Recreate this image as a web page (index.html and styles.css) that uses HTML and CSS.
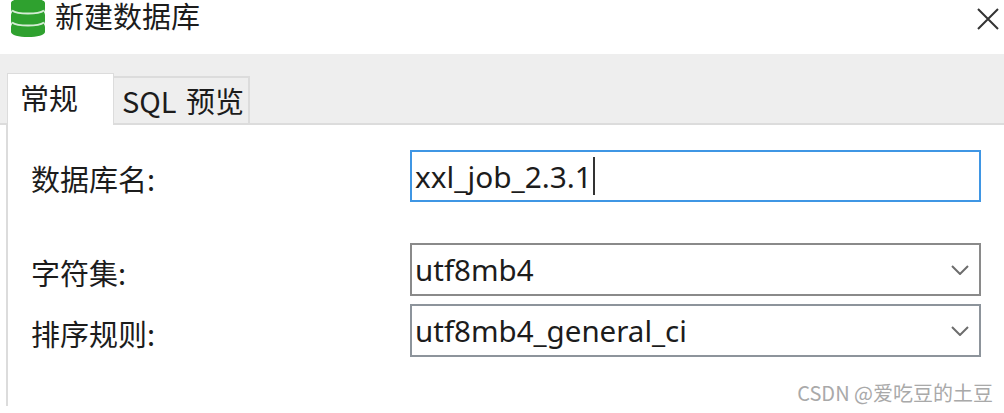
FILE: index.html
```html
<!DOCTYPE html>
<html lang="zh">
<head>
<meta charset="utf-8">
<title>新建数据库</title>
<link rel="stylesheet" href="styles.css">
</head>
<body>
<div class="dialog">
  <header class="titlebar">
    <svg class="db-icon" width="36" height="38" viewBox="0 0 36 38">
      <path class="db-body" d="M1 3C1 0 9-2 18-2S35 0 35 3V9C35 10 34.500 11 34 12C34.500 13 35 14 35 15V21C35 22 34.500 23 34 24C34.500 25 35 26 35 27V32C35 35 27 37 18 37S1 35 1 32V27C1 26 1.500 25 2 24C1.500 23 1 22 1 21V15C1 14 1.500 13 2 12C1.500 11 1 10 1 9Z"/>
      <path class="db-line" d="M2 10.500C8 14.500 28 14.500 34 10.500M2 22.500C8 26.500 28 26.500 34 22.500"/>
    </svg>
    <h1 class="title">新建数据库</h1>
    <svg class="close" width="22" height="22" viewBox="0 0 22 22">
      <path d="M1 1L21 21M21 1L1 21"/>
    </svg>
  </header>
  <nav class="tabstrip">
    <div class="tab tab-active">常规</div>
    <div class="tab tab-idle">SQL 预览</div>
  </nav>
  <main class="panel">
    <div class="row row-name">
      <label class="label">数据库名:</label>
      <div class="field field-focus"><span>xxl_job_2.3.1</span><i class="caret"></i></div>
    </div>
    <div class="row row-charset">
      <label class="label">字符集:</label>
      <div class="field"><span>utf8mb4</span>
        <svg class="chev" width="18" height="10" viewBox="0 0 18 10"><path d="M1 1L9 9L17 1"/></svg>
      </div>
    </div>
    <div class="row row-collate">
      <label class="label">排序规则:</label>
      <div class="field field-alt"><span>utf8mb4_general_ci</span>
        <svg class="chev" width="18" height="10" viewBox="0 0 18 10"><path d="M1 1L9 9L17 1"/></svg>
      </div>
    </div>
  </main>
  <div class="watermark">CSDN @爱吃豆的土豆</div>
</div>
</body>
</html>
```
FILE: styles.css
```css
* { box-sizing: border-box; }
html, body { margin: 0; padding: 0; background: #fff; }
body { width: 1004px; height: 413px; overflow: hidden; }
.dialog {
  position: relative;
  width: 1004px;
  height: 413px;
  font-family: "Noto Sans", "Noto Sans CJK SC", sans-serif;
  color: #1c1c1c;
}
.titlebar {
  height: 54px;
  display: flex;
  align-items: flex-start;
  padding-left: 10px;
}
.db-icon { flex: none; }
.db-body { fill: #2fa12f; }
.db-line { fill: none; stroke: #d5ecd5; stroke-width: 2; }
.title {
  margin: 2px 0 0 9px;
  font-size: 29px;
  font-weight: 400;
  line-height: 32px;
  flex: 1;
  font-family: "Liberation Sans", "Noto Sans CJK SC", sans-serif;
}
.close { flex: none; margin: 8px 5px 0 0; }
.close path { fill: none; stroke: #333; stroke-width: 2; }
.tabstrip {
  height: 71px;
  background: #eeeeee;
  border-bottom: 2px solid #dcdcdc;
  display: flex;
  align-items: flex-end;
  padding-left: 7px;
}
.tab {
  font-size: 29px;
  font-family: "Noto Sans CJK SC", sans-serif;
  display: flex;
  align-items: center;
}
.tab-active {
  width: 107px;
  height: 52px;
  margin-bottom: -2px;
  background: #fff;
  border: 1px solid #dcdcdc;
  border-bottom: 0;
  padding: 0 0 5px 12px;
}
.tab-idle {
  width: 136px;
  height: 47px;
  background: #eeeeee;
  border: 2px solid #dcdcdc;
  border-left: 0;
  border-bottom: 0;
  padding: 0 0 1px 8px;
  white-space: pre;
  word-spacing: 3px;
}
.panel {
  margin-left: 6px;
  height: 281px;
  border-left: 2px solid #dcdcdc;
  padding-top: 25px;
}
.row {
  display: grid;
  grid-template-columns: 403px 570px;
  align-items: center;
}
.row-charset { margin-top: 41px; }
.row-collate { margin-top: 8px; }
.label {
  padding-left: 23px;
  font-size: 29px;
  font-family: "Noto Sans CJK SC", sans-serif;
  padding-top: 4px;
}
.field {
  height: 53px;
  border: 2px solid #8a8a8a;
  display: flex;
  align-items: center;
  padding-left: 3px;
  margin-left: -1px;
  font-size: 29.5px;
  position: relative;
  background: #fff;
}
.field-alt { border-color: #8d949b; }
.field-focus { border-color: #3f96e4; height: 52px; font-size: 29.800px; }
.caret {
  display: block;
  width: 2px;
  height: 38px;
  background: #333;
  margin-left: 1px;
}
.chev { margin-left: auto; margin-right: 10px; }
.chev path { fill: none; stroke: #6d6d6d; stroke-width: 2; }
.watermark {
  position: absolute;
  right: 11px;
  top: 378px;
  font-size: 20px;
  color: #a9a9a9;
  font-family: "Noto Sans CJK SC", sans-serif;
}
```
